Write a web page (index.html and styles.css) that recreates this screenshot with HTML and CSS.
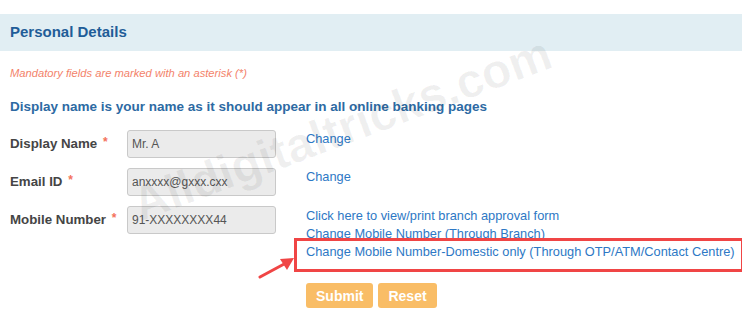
FILE: index.html
```html
<!DOCTYPE html>
<html lang="en">
<head>
    <meta charset="UTF-8">
    <title>Personal Details</title>
    <link rel="stylesheet" href="styles.css">
</head>
<body>
    <div class="panel">
        <div class="panel-head">Personal Details</div>
        <p class="note">Mandatory fields are marked with an asterisk (*)</p>
        <p class="intro">Display name is your name as it should appear in all online banking pages</p>

        <div class="form">
            <div class="row">
                <label class="lbl">Display Name <span class="req">*</span></label>
                <div class="field"><input class="inp" type="text" value="Mr. A" readonly></div>
                <div class="links"><a href="#">Change</a></div>
            </div>
            <div class="row">
                <label class="lbl">Email ID <span class="req">*</span></label>
                <div class="field"><input class="inp" type="text" value="anxxxx@gxxx.cxx" readonly></div>
                <div class="links"><a href="#">Change</a></div>
            </div>
            <div class="row">
                <label class="lbl">Mobile Number <span class="req">*</span></label>
                <div class="field"><input class="inp" type="text" value="91-XXXXXXXX44" readonly></div>
                <div class="links multi">
                    <a href="#">Click here to view/print branch approval form</a>
                    <a href="#">Change Mobile Number (Through Branch)</a>
                    <a href="#" class="marked">Change Mobile Number-Domestic only (Through OTP/ATM/Contact Centre)
                        <span class="mark-box"></span>
                        <svg class="mark-arrow" width="40" height="26" viewBox="0 0 40 26">
                            <line x1="2" y1="22" x2="28" y2="8" stroke="#f04545" stroke-width="3" stroke-linecap="round"/>
                            <polygon points="36,3 22,4 29,15" fill="#f04545"/>
                        </svg>
                    </a>
                </div>
            </div>
            <div class="actions">
                <button class="btn">Submit</button>
                <button class="btn">Reset</button>
            </div>
        </div>

        <div class="watermark">Alldigitaltricks.com</div>
    </div>
</body>
</html>
```

FILE: styles.css
```css
body {
    margin: 0;
    background: #fff;
    font-family: "Liberation Sans", Arial, sans-serif;
    width: 742px;
    height: 318px;
    overflow: hidden;
}
.panel {
    position: relative;
    padding-top: 14px;
}
.panel-head {
    background: #e1eef3;
    height: 37px;
    line-height: 36px;
    padding-left: 10px;
    font-size: 15px;
    font-weight: bold;
    color: #1f5d98;
}
.note {
    margin: 14px 0 0 10px;
    font-size: 11.2px;
    font-style: italic;
    color: #f3826a;
    line-height: 16px;
}
.intro {
    margin: 17px 0 0 10px;
    font-size: 13.5px;
    font-weight: bold;
    color: #2d6aa3;
    line-height: 18px;
}
.form {
    margin-top: 14px;
    padding-left: 10px;
}
.row {
    display: grid;
    grid-template-columns: 117px 179px 1fr;
    align-items: start;
    margin-bottom: 10px;
}
.lbl {
    height: 28px;
    font-size: 13.3px;
    font-weight: bold;
    color: #454545;
    line-height: 28px;
}
.req {
    position: relative;
    top: -2px;
    margin-left: 2px;
    font-size: 12px;
    line-height: 1;
    color: #f4725c;
}
.inp {
    display: block;
    box-sizing: border-box;
    width: 149px;
    height: 28px;
    margin: 0;
    padding: 0 4px;
    border: 1px solid #c9c9c9;
    border-radius: 3px;
    background: #ebebeb;
    font-family: "Liberation Sans", Arial, sans-serif;
    font-size: 12px;
    color: #555;
    outline: none;
}
.links {
    display: flex;
    flex-direction: column;
    font-size: 12.8px;
    line-height: 18px;
}
.links a {
    color: #2d78c5;
    text-decoration: none;
    white-space: nowrap;
}
.links.multi {
    margin-top: 1px;
}
.marked {
    position: relative;
}
.mark-box {
    position: absolute;
    left: -12px;
    top: -5px;
    width: 444px;
    height: 28px;
    border: 3px solid #f04545;
}
.mark-arrow {
    position: absolute;
    left: -48px;
    top: 12px;
}
.actions {
    display: flex;
    gap: 5px;
    margin-left: 296px;
    margin-top: 22px;
}
.btn {
    height: 25px;
    padding: 0 10px;
    border: none;
    border-radius: 3px;
    background: #f9bd66;
    color: #fff;
    font-family: "Liberation Sans", Arial, sans-serif;
    font-size: 14px;
    font-weight: bold;
}
.watermark {
    position: absolute;
    left: 143px;
    top: 181px;
    font-size: 48px;
    line-height: 1;
    font-weight: bold;
    color: rgba(0, 0, 0, 0.06);
    transform: rotate(-20.5deg);
    transform-origin: left bottom;
    white-space: nowrap;
    pointer-events: none;
}
```
